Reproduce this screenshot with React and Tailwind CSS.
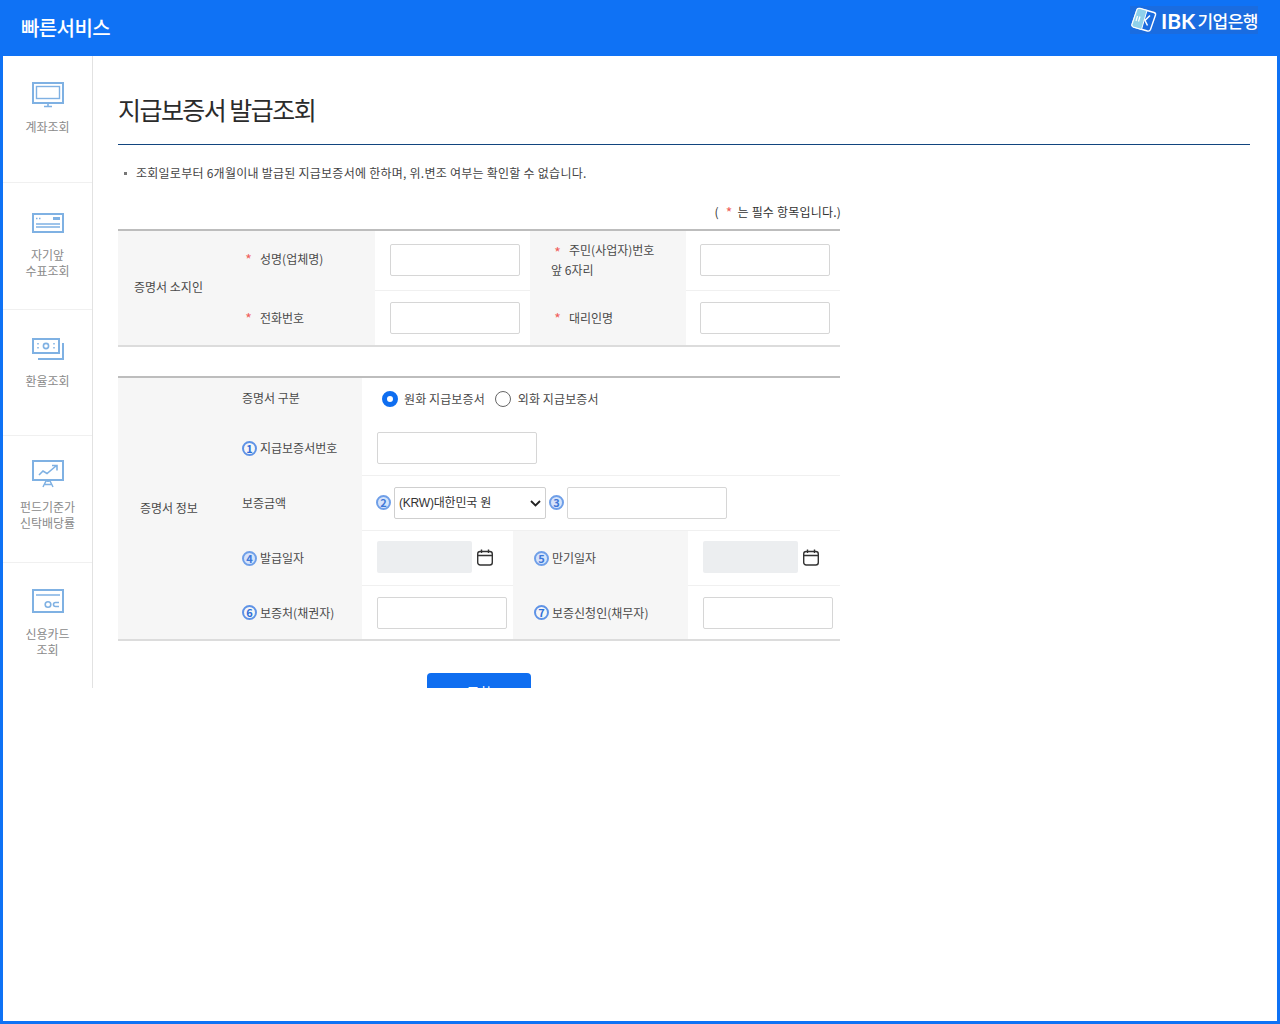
import React from "react";

const Star = ({ className = "" }) => <span className={`inline-block w-[7px] text-center text-[#f0605a] text-[14px] leading-[12px] align-[-3px] ${className}`}>*</span>;

const Num = ({ n, light }) => (
  <span className={`inline-flex shrink-0 w-[15px] h-[15px] rounded-full border-2 items-center justify-center text-[11px] leading-none font-bold ${light ? "border-[#6f9fe8] bg-[#d6e4fa] text-[#3f78d8]" : "border-[#5f93e6] text-[#2f6fd8]"}`}>{n}</span>
);

const Text = ({ className = "", children }) => <input aria-label={children} className={`h-[32px] bg-white border border-[#d6d6d6] rounded-[2px] ${className}`} />;

const Cal = () => (
  <svg width="16" height="17" viewBox="0 0 16 17" fill="none" stroke="#333" strokeWidth="1.4" className="shrink-0">
    <rect x="0.7" y="2.5" width="14.6" height="13.500" rx="2.5" />
    <path d="M0.7 6.500h14.600M4.500 0.500v3.500M11.500 0.500v3.500" />
  </svg>
);

const ICON = "#7fb1e3";
const icons = {
  monitor: (
    <svg width="32" height="26" viewBox="0 0 32 26" fill="none" stroke={ICON} strokeWidth="2">
      <rect x="1" y="1" width="30" height="20" />
      <rect x="4.500" y="4.500" width="23" height="12" strokeWidth="1.400" />
      <path d="M12 24.500h8M16 21v3" strokeWidth="1.600" />
    </svg>
  ),
  check: (
    <svg width="32" height="20" viewBox="0 0 32 20" fill="none" stroke={ICON}>
      <rect x="1" y="1" width="30" height="18" strokeWidth="2" />
      <path d="M4 11h24M4 14h24" strokeWidth="1.400" />
      <path d="M4 5.500h1.500M7 5.500h1.500" strokeWidth="1.500" />
      <path d="M21 5.500h7" strokeWidth="3" />
    </svg>
  ),
  money: (
    <svg width="32" height="22" viewBox="0 0 32 22" fill="none" stroke={ICON}>
      <rect x="1" y="1" width="26" height="14" strokeWidth="2" />
      <circle cx="14" cy="8" r="2.600" strokeWidth="1.600" />
      <path d="M6 5v1.500M6 9v1.500M22 5v1.500M22 9v1.500" strokeWidth="1.500" />
      <path d="M31 5v16H6" strokeWidth="2" />
    </svg>
  ),
  chart: (
    <svg width="32" height="28" viewBox="0 0 32 28" fill="none" stroke={ICON}>
      <rect x="1" y="1" width="30" height="19" strokeWidth="2" />
      <path d="M7 15l4-4 4 2.500 9-7.500M20 5.500h5v5" strokeWidth="1.600" />
      <path d="M16 20v2M11 27l3-6h4l3 6M13 24.500h6" strokeWidth="1.500" />
    </svg>
  ),
  card: (
    <svg width="32" height="24" viewBox="0 0 32 24" fill="none" stroke={ICON}>
      <rect x="1" y="1" width="30" height="22" strokeWidth="2" />
      <path d="M4 6h24" strokeWidth="1.500" />
      <circle cx="16" cy="15.500" r="2.800" strokeWidth="1.600" />
      <path d="M27 13.500h-3.500a2 2 0 0 0 0 4H27" strokeWidth="1.600" />
    </svg>
  ),
};

const menu = [
  { icon: "monitor", label: ["계좌조회"], h: "h-[127px]", pt: "pt-[26px]", gap: "mt-[11px]" },
  { icon: "check", label: ["자기앞", "수표조회"], h: "h-[127px]", pt: "pt-[30px]", gap: "mt-[14px]" },
  { icon: "money", label: ["환율조회"], h: "h-[126px]", pt: "pt-[28px]", gap: "mt-[13px]" },
  { icon: "chart", label: ["펀드기준가", "신탁배당률"], h: "h-[127px]", pt: "pt-[24px]", gap: "mt-[11px]" },
  { icon: "card", label: ["신용카드", "조회"], h: "h-[125px]", pt: "pt-[26px]", gap: "mt-[13px]" },
];

const Cell = ({ className = "", children }) => <div className={`flex items-center ${className}`}>{children}</div>;

export default function App() {
  return (
    <div className="w-[1280px] h-[1024px] bg-[#0f72f5] pb-[3px] px-[3px] overflow-hidden text-[12px] text-[#4a4a4a] font-['Noto_Sans_CJK_KR','Noto_Sans',sans-serif]">
      <header className="h-[56px] flex items-start justify-between text-white">
        <h1 className="ml-[18px] mt-[12px] text-[20px] leading-[32px] tracking-[-0.6px] font-medium">빠른서비스</h1>
        <div className="flex items-center mt-[6px] mr-[19px] h-[28px] bg-[#1a6ce0]">
          <svg width="28" height="26" viewBox="0 0 28 26" fill="none">
            <path d="M7 2.500q1-1.500 3-1l14 4q2 .8 1.500 2.500l-5 14.500q-.8 2-3 1.500L3.500 20q-2-.8-1.500-2.500z" fill="#1a6ce0" stroke="#fff" strokeWidth="1.400" />
            <path d="M7 2.500q1-1.500 3-1l7 2-5.500 19-8-2.500q-2-.8-1.500-2.500z" fill="#8fd0ea" stroke="#fff" strokeWidth="1" />
            <path d="M7.500 9l-1.500 5M10 9.500l-1.500 5" stroke="#fff" strokeWidth="1.200" />
            <path d="M20 8.500l-5 5 2.500 5" stroke="#fff" strokeWidth="1.500" />
          </svg>
          <span className="ml-[3px] text-[21px] leading-none font-bold font-['Lato','Noto_Sans',sans-serif]">IBK</span>
          <span className="ml-[2px] text-[17px] leading-none font-medium tracking-[-0.5px]">기업은행</span>
        </div>
      </header>

      <div className="h-[965px] bg-white">
        <div className="h-[632px] flex overflow-hidden">
          <aside className="w-[90px] shrink-0 border-r border-[#e2e2e2] text-[#8a8a8a]">
            {menu.map((m, i) => (
              <div key={m.icon} className={`${m.h} ${m.pt} flex flex-col items-center ${i < 4 ? "border-b border-[#f0f0f0]" : ""}`}>
                {icons[m.icon]}
                <div className={`${m.gap} text-center leading-[16px]`}>
                  {m.label.map((l) => <div key={l}>{l}</div>)}
                </div>
              </div>
            ))}
          </aside>

          <main className="flex-1 pl-[25px] pr-[27px]">
            <h2 className="pt-[33px] h-[89px] border-b border-[#12457f] text-[25px] leading-[40px] tracking-[-1.55px] text-[#2b2b2b]">지급보증서 발급조회</h2>
            <p className="mt-[19px] pl-[6px] leading-[18px] text-[12px] text-[#444] tracking-[0.25px]">
              <span className="inline-block w-[3px] h-[3px] bg-[#777] align-middle mr-[9px] mb-[3px]"></span>
              조회일로부터 6개월이내 발급된 지급보증서에 한하며, 위.변조 여부는 확인할 수 없습니다.
            </p>

            <div className="w-[723px] mt-[21px] h-[18px] flex items-center justify-end leading-[18px] text-[#333]">
              <span>(</span><Star className="ml-[7px] mr-[5px]" /><span className="tracking-[0.2px]">는 필수 항목입니다.)</span>
            </div>

            <section className="w-[722px] mt-[8px] border-t-2 border-b-2 border-t-[#bdbdbd] border-b-[#dcdcdc] grid grid-cols-[120px_137px_155px_156px_154px] grid-rows-[60px_54px] bg-white">
              <Cell className="row-span-2 bg-[#f6f6f6] pl-[16px] pb-[2px]">증명서 소지인</Cell>
              <Cell className="bg-[#f6f6f6] pl-[7px] pb-[4px] gap-[8px]"><Star />성명(업체명)</Cell>
              <Cell className="border-b border-[#f0f0f0] pl-[15px] pb-[1px]"><Text className="w-[130px]">성명</Text></Cell>
              <div className="bg-[#f6f6f6] pl-[21px] pt-[9px] leading-[20px]"><div className="pl-[3px]"><Star className="mr-[8px]" />주민(사업자)번호</div><div>앞 6자리</div></div>
              <Cell className="border-b border-[#f0f0f0] pl-[14px] pb-[1px]"><Text className="w-[130px]">주민번호</Text></Cell>
              <Cell className="bg-[#f6f6f6] pl-[7px] gap-[8px]"><Star />전화번호</Cell>
              <Cell className="pl-[15px] pb-[1px]"><Text className="w-[130px]">전화번호</Text></Cell>
              <Cell className="bg-[#f6f6f6] pl-[24px] gap-[8px]"><Star />대리인명</Cell>
              <Cell className="pl-[14px] pb-[1px]"><Text className="w-[130px]">대리인명</Text></Cell>
            </section>

            <section className="w-[722px] mt-[29px] border-t-2 border-b-2 border-t-[#bdbdbd] border-b-[#dcdcdc] grid grid-cols-[120px_124px_151px_175px_152px] grid-rows-[44px_54px_55px_55px_53px]">
              <Cell className="row-span-5 bg-[#f6f6f6] pl-[22px] pb-[1px]">증명서 정보</Cell>
              <Cell className="bg-[#f6f6f6] pl-[4px] pb-[4px]">증명서 구분</Cell>
              <Cell className="col-span-3 pl-[20px] pb-[3px] gap-[5px] tracking-[0.1px]">
                <span className="w-[16px] h-[16px] rounded-full border-[5px] border-[#0f6ef0] bg-white shrink-0"></span>
                <span className="ml-[1px] mt-[1px]">원화 지급보증서</span>
                <span className="ml-[5px] w-[16px] h-[16px] rounded-full border border-[#666] shrink-0"></span>
                <span className="ml-[2px] mt-[1px]">외화 지급보증서</span>
              </Cell>
              <Cell className="bg-[#f6f6f6] pl-[4px] pb-[2px] gap-[3px]"><Num n="1" />지급보증서번호</Cell>
              <Cell className="col-span-3 pl-[15px] pb-[2px] border-b border-[#f0f0f0]"><Text className="w-[160px]">지급보증서번호</Text></Cell>
              <Cell className="bg-[#f6f6f6] pl-[4px] pb-[2px]">보증금액</Cell>
              <Cell className="col-span-3 pl-[14px] pb-[1px] gap-[3px] border-b border-[#f0f0f0]">
                <Num n="2" light />
                <span className="relative w-[152px] h-[32px] shrink-0">
                  <select aria-label="통화" className="appearance-none w-full h-full bg-white border border-[#cfcfcf] rounded-[2px] pl-[4px] text-[12px] text-[#333] font-['Liberation_Sans','Noto_Sans_CJK_KR',sans-serif] tracking-[-0.2px]">
                    <option>(KRW)대한민국 원</option>
                  </select>
                  <svg className="absolute right-[5px] top-[13px] pointer-events-none" width="11" height="7" viewBox="0 0 11 7" fill="none" stroke="#222" strokeWidth="1.800"><path d="M1 1l4.500 4.500L10 1" /></svg>
                </span>
                <Num n="3" light />
                <Text className="w-[160px]">보증금액</Text>
              </Cell>
              <Cell className="bg-[#f6f6f6] pl-[4px] pb-[1px] gap-[3px]"><Num n="4" light />발급일자</Cell>
              <Cell className="pl-[15px] pb-[2px] gap-[5px] border-b border-[#f0f0f0]">
                <span className="w-[95px] h-[32px] bg-[#eceef0] rounded-[2px]"></span><Cal />
              </Cell>
              <Cell className="bg-[#f6f6f6] pl-[21px] pb-[1px] gap-[3px]"><Num n="5" light />만기일자</Cell>
              <Cell className="pl-[15px] pb-[2px] gap-[5px] border-b border-[#f0f0f0]">
                <span className="w-[95px] h-[32px] bg-[#eceef0] rounded-[2px]"></span><Cal />
              </Cell>
              <Cell className="bg-[#f6f6f6] pl-[4px] gap-[3px]"><Num n="6" />보증처(채권자)</Cell>
              <Cell className="pl-[15px]"><Text className="w-[130px]">보증처</Text></Cell>
              <Cell className="bg-[#f6f6f6] pl-[21px] gap-[3px]"><Num n="7" />보증신청인(채무자)</Cell>
              <Cell className="pl-[15px]"><Text className="w-[130px]">보증신청인</Text></Cell>
            </section>

            <div className="w-[722px] mt-[32px] flex justify-center">
              <button className="w-[104px] h-[30px] bg-[#0f6ef0] rounded-t-[4px] text-white text-[13px] pt-[7px]">조회</button>
            </div>
          </main>
        </div>
      </div>
    </div>
  );
}
